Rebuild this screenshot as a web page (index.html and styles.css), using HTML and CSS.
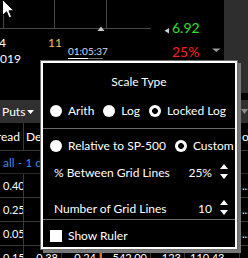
FILE: index.html
```html
<!DOCTYPE html>
<html>
<head>
<meta charset="utf-8">
<link rel="stylesheet" href="styles.css">
</head>
<body>
<div class="app">
  <div class="chart">
    <div class="plot">
      <svg class="plot-svg" width="224" height="93" viewBox="0 0 224 93">
        <g stroke="#474747" stroke-width="1">
          <line x1="3.5" y1="0" x2="3.5" y2="28"/>
          <line x1="54.5" y1="0" x2="54.5" y2="28"/>
          <line x1="106.5" y1="0" x2="106.5" y2="28"/>
          <line x1="0" y1="28.5" x2="151" y2="28.5"/>
        </g>
        <polygon points="97.5,31 101,26.5 104.5,31" fill="#c8c8c8"/>
        <polygon points="169,28 164.5,30.8 169,33.5" fill="#d0d0d0"/>
        <polygon points="212,48.5 220.5,48.5 216.3,52" fill="#9a9a9a"/>
        <line x1="68" y1="58.5" x2="88" y2="58.5" stroke="#ffffff"/>
        <line x1="88" y1="58.5" x2="103" y2="58.5" stroke="#6e6e6e"/>
      </svg>
      <span class="tick day">4</span>
      <span class="tick year">2019</span>
      <span class="tick count">11</span>
      <span class="time">01:05:37</span>
      <span class="price">6.92</span>
      <span class="pct">25%</span>
    </div>
    <div class="axis"></div>
  </div>

  <div class="tabs">
    <span class="tab">Puts<svg class="caret" width="7" height="4" viewBox="0 0 7 4"><polygon points="0,0 7,0 3.5,4" fill="#ffffff"/></svg></span>
    <svg class="caret-r" width="7" height="5" viewBox="0 0 7 5"><polygon points="0,0 7,0 3.5,5" fill="#8a8a8a"/></svg>
  </div>

  <div class="trow head">
    <div class="c c1 r">Spread</div>
    <div class="c c2">Delta</div>
    <div class="c c3"></div>
    <div class="c c4"></div>
    <div class="c c5"></div>
    <div class="c c6"></div>
    <div class="c c7">oc</div>
  </div>

  <div class="group">all - 1 day</div>

  <div class="trow">
    <div class="c c1">0.40</div><div class="c c2"></div><div class="c c3"></div><div class="c c4"></div><div class="c c5"></div><div class="c c6"></div><div class="c c7">...</div>
  </div>
  <div class="trow">
    <div class="c c1">0.25</div><div class="c c2"></div><div class="c c3"></div><div class="c c4"></div><div class="c c5"></div><div class="c c6"></div><div class="c c7">...</div>
  </div>
  <div class="trow">
    <div class="c c1">0.05</div><div class="c c2"></div><div class="c c3"></div><div class="c c4"></div><div class="c c5"></div><div class="c c6"></div><div class="c c7">...</div>
  </div>
  <div class="trow">
    <div class="c c1">0.15</div><div class="c c2 r">0.38</div><div class="c c3 r">0.24</div><div class="c c4 r mark">542.00</div><div class="c c5 r">123</div><div class="c c6">110.43</div><div class="c c7">...</div>
  </div>
</div>

<div class="popup">
  <div class="pane top">
    <div class="title">Scale Type</div>
    <div class="radios">
      <span class="opt"><span class="radio"></span>Arith</span>
      <span class="opt"><span class="radio"></span>Log</span>
      <span class="opt"><span class="radio on"></span>Locked Log</span>
    </div>
  </div>
  <div class="pane mid">
    <div class="radios">
      <span class="opt"><span class="radio"></span>Relative to SP-500</span>
      <span class="opt"><span class="radio on"></span>Custom</span>
    </div>
    <div class="spin-row">
      <span class="spin-label">% Between Grid Lines</span>
      <span class="val">25%</span>
      <svg class="spinner" width="8" height="15" viewBox="0 0 8 15"><polygon points="0,5 4,0 8,5" fill="#ffffff"/><polygon points="0,10 8,10 4,15" fill="#ffffff"/></svg>
    </div>
    <div class="spin-row second">
      <span class="spin-label">Number of Grid Lines</span>
      <span class="val">10</span>
      <svg class="spinner" width="8" height="15" viewBox="0 0 8 15"><polygon points="0,5 4,0 8,5" fill="#ffffff"/><polygon points="0,10 8,10 4,15" fill="#ffffff"/></svg>
    </div>
  </div>
  <div class="pane last">
    <span class="opt"><span class="box"></span>Show Ruler</span>
  </div>
</div>

<svg class="cursor" width="14" height="20" viewBox="0 0 14 20">
  <path d="M0.5,0.5 L0.5,16.5 L4.5,12.8 L7.2,18.8 L9.6,17.8 L7,11.8 L12,11.8 Z" fill="#ffffff" stroke="#000000" stroke-width="1" stroke-linejoin="miter"/>
</svg>
</body>
</html>
```

FILE: styles.css
```css
html, body {
  margin: 0;
  padding: 0;
}
body {
  width: 248px;
  height: 258px;
  overflow: hidden;
  position: relative;
  background: #000;
  color: #fff;
  font-family: Lato, "Noto Sans", sans-serif;
}

.app {
  width: 248px;
}

/* chart */
.chart {
  display: flex;
  align-items: flex-start;
  height: 100px;
}
.plot {
  position: relative;
  flex: 1;
  height: 93px;
}
.plot-svg {
  position: absolute;
  left: 0;
  top: 0;
}
.axis {
  width: 24px;
  height: 93px;
  background: #2e2e2e;
}
.tick, .time, .price, .pct {
  position: absolute;
  line-height: 1;
  white-space: nowrap;
}
.tick {
  font-size: 12px;
  color: #fff;
}
.day { left: -1px; top: 37px; }
.year { left: -7px; top: 53px; }
.count { left: 48px; top: 37px; color: #f3c265; }
.time {
  left: 68px;
  top: 46px;
  font-size: 10px;
  color: #cddbf3;
}
.price {
  left: 172px;
  top: 21px;
  font-size: 14px;
  color: #2ee02e;
}
.pct {
  left: 172px;
  top: 45px;
  font-size: 14px;
  color: #ff1e1e;
}

/* tab bar */
.tabs {
  height: 23px;
  background: #303030;
  display: flex;
  align-items: center;
  justify-content: space-between;
  padding-left: 2px;
  font-size: 12px;
  box-sizing: border-box;
}
.tab {
  display: flex;
  align-items: center;
  gap: 2px;
}
.caret { display: block; }
.caret-r { display: block; margin-right: 0; }

/* table */
.trow {
  display: grid;
  grid-template-columns: 24px 38px 38px 51px 34px 55px 8px;
  height: 24px;
  box-sizing: border-box;
  border-bottom: 1px solid #383838;
  font-size: 11px;
}
.trow.head {
  height: 28px;
  font-size: 12px;
}
.c {
  display: flex;
  align-items: center;
  overflow: hidden;
  white-space: nowrap;
  border-right: 1px solid #383838;
  padding: 0 3px;
  box-sizing: border-box;
}
.c.r {
  justify-content: flex-end;
}
.c1 { padding-left: 3px; }
.c2 { padding-left: 2px; }
.c7 {
  border-right: none;
  padding: 0 0 0 2px;
}
.c6 { padding-left: 5px; }
.mark {
  border-left: 2px solid #e07020;
}
.group {
  height: 23px;
  box-sizing: border-box;
  border-bottom: 1px solid #2a2a2a;
  display: flex;
  align-items: center;
  padding-left: 3px;
  font-size: 12px;
  color: #3f8ae4;
  white-space: nowrap;
  overflow: hidden;
}

/* popup */
.popup {
  position: absolute;
  left: 41px;
  top: 61px;
  width: 196px;
  height: 188px;
  box-sizing: border-box;
  border: 2px solid #fff;
  background: #000;
  box-shadow: 0 0 0 1px #6a6a6a, 3px 3px 0 1px #777;
  display: flex;
  flex-direction: column;
  font-size: 12px;
  color: #fff;
}
.pane {
  padding: 0 7px;
}
.pane.top {
  padding-top: 9px;
  padding-bottom: 7px;
  border-bottom: 1px solid #6c6c6c;
}
.pane.top .radios {
  margin-top: 9px;
}
.title {
  line-height: 20px;
  text-align: center;
}
.radios {
  display: flex;
  align-items: center;
  gap: 9px;
  height: 20px;
}
.opt {
  display: flex;
  align-items: center;
  gap: 6px;
  line-height: 20px;
  white-space: nowrap;
}
.radio {
  width: 12px;
  height: 12px;
  border-radius: 50%;
  background: #fff;
  flex: none;
}
.radio.on {
  background: radial-gradient(circle, #000 0 2.6px, #fff 3.2px);
}
.pane.mid {
  padding-top: 7px;
  border-bottom: 1px solid #6c6c6c;
}
.spin-row {
  display: flex;
  align-items: center;
  height: 20px;
  line-height: 20px;
  padding-left: 4px;
  margin-top: 7px;
}
.spin-row.second {
  margin-top: 16px;
}
.spin-label {
  flex: 1;
}
.val {
  margin-right: 8px;
}
.spinner {
  align-self: flex-start;
  margin-top: 1px;
  display: block;
}
.pane.last {
  padding-top: 6px;
}
.box {
  width: 12px;
  height: 12px;
  background: #fff;
  flex: none;
}

/* mouse pointer overlay */
.cursor {
  position: absolute;
  left: 2px;
  top: -1px;
}
```
